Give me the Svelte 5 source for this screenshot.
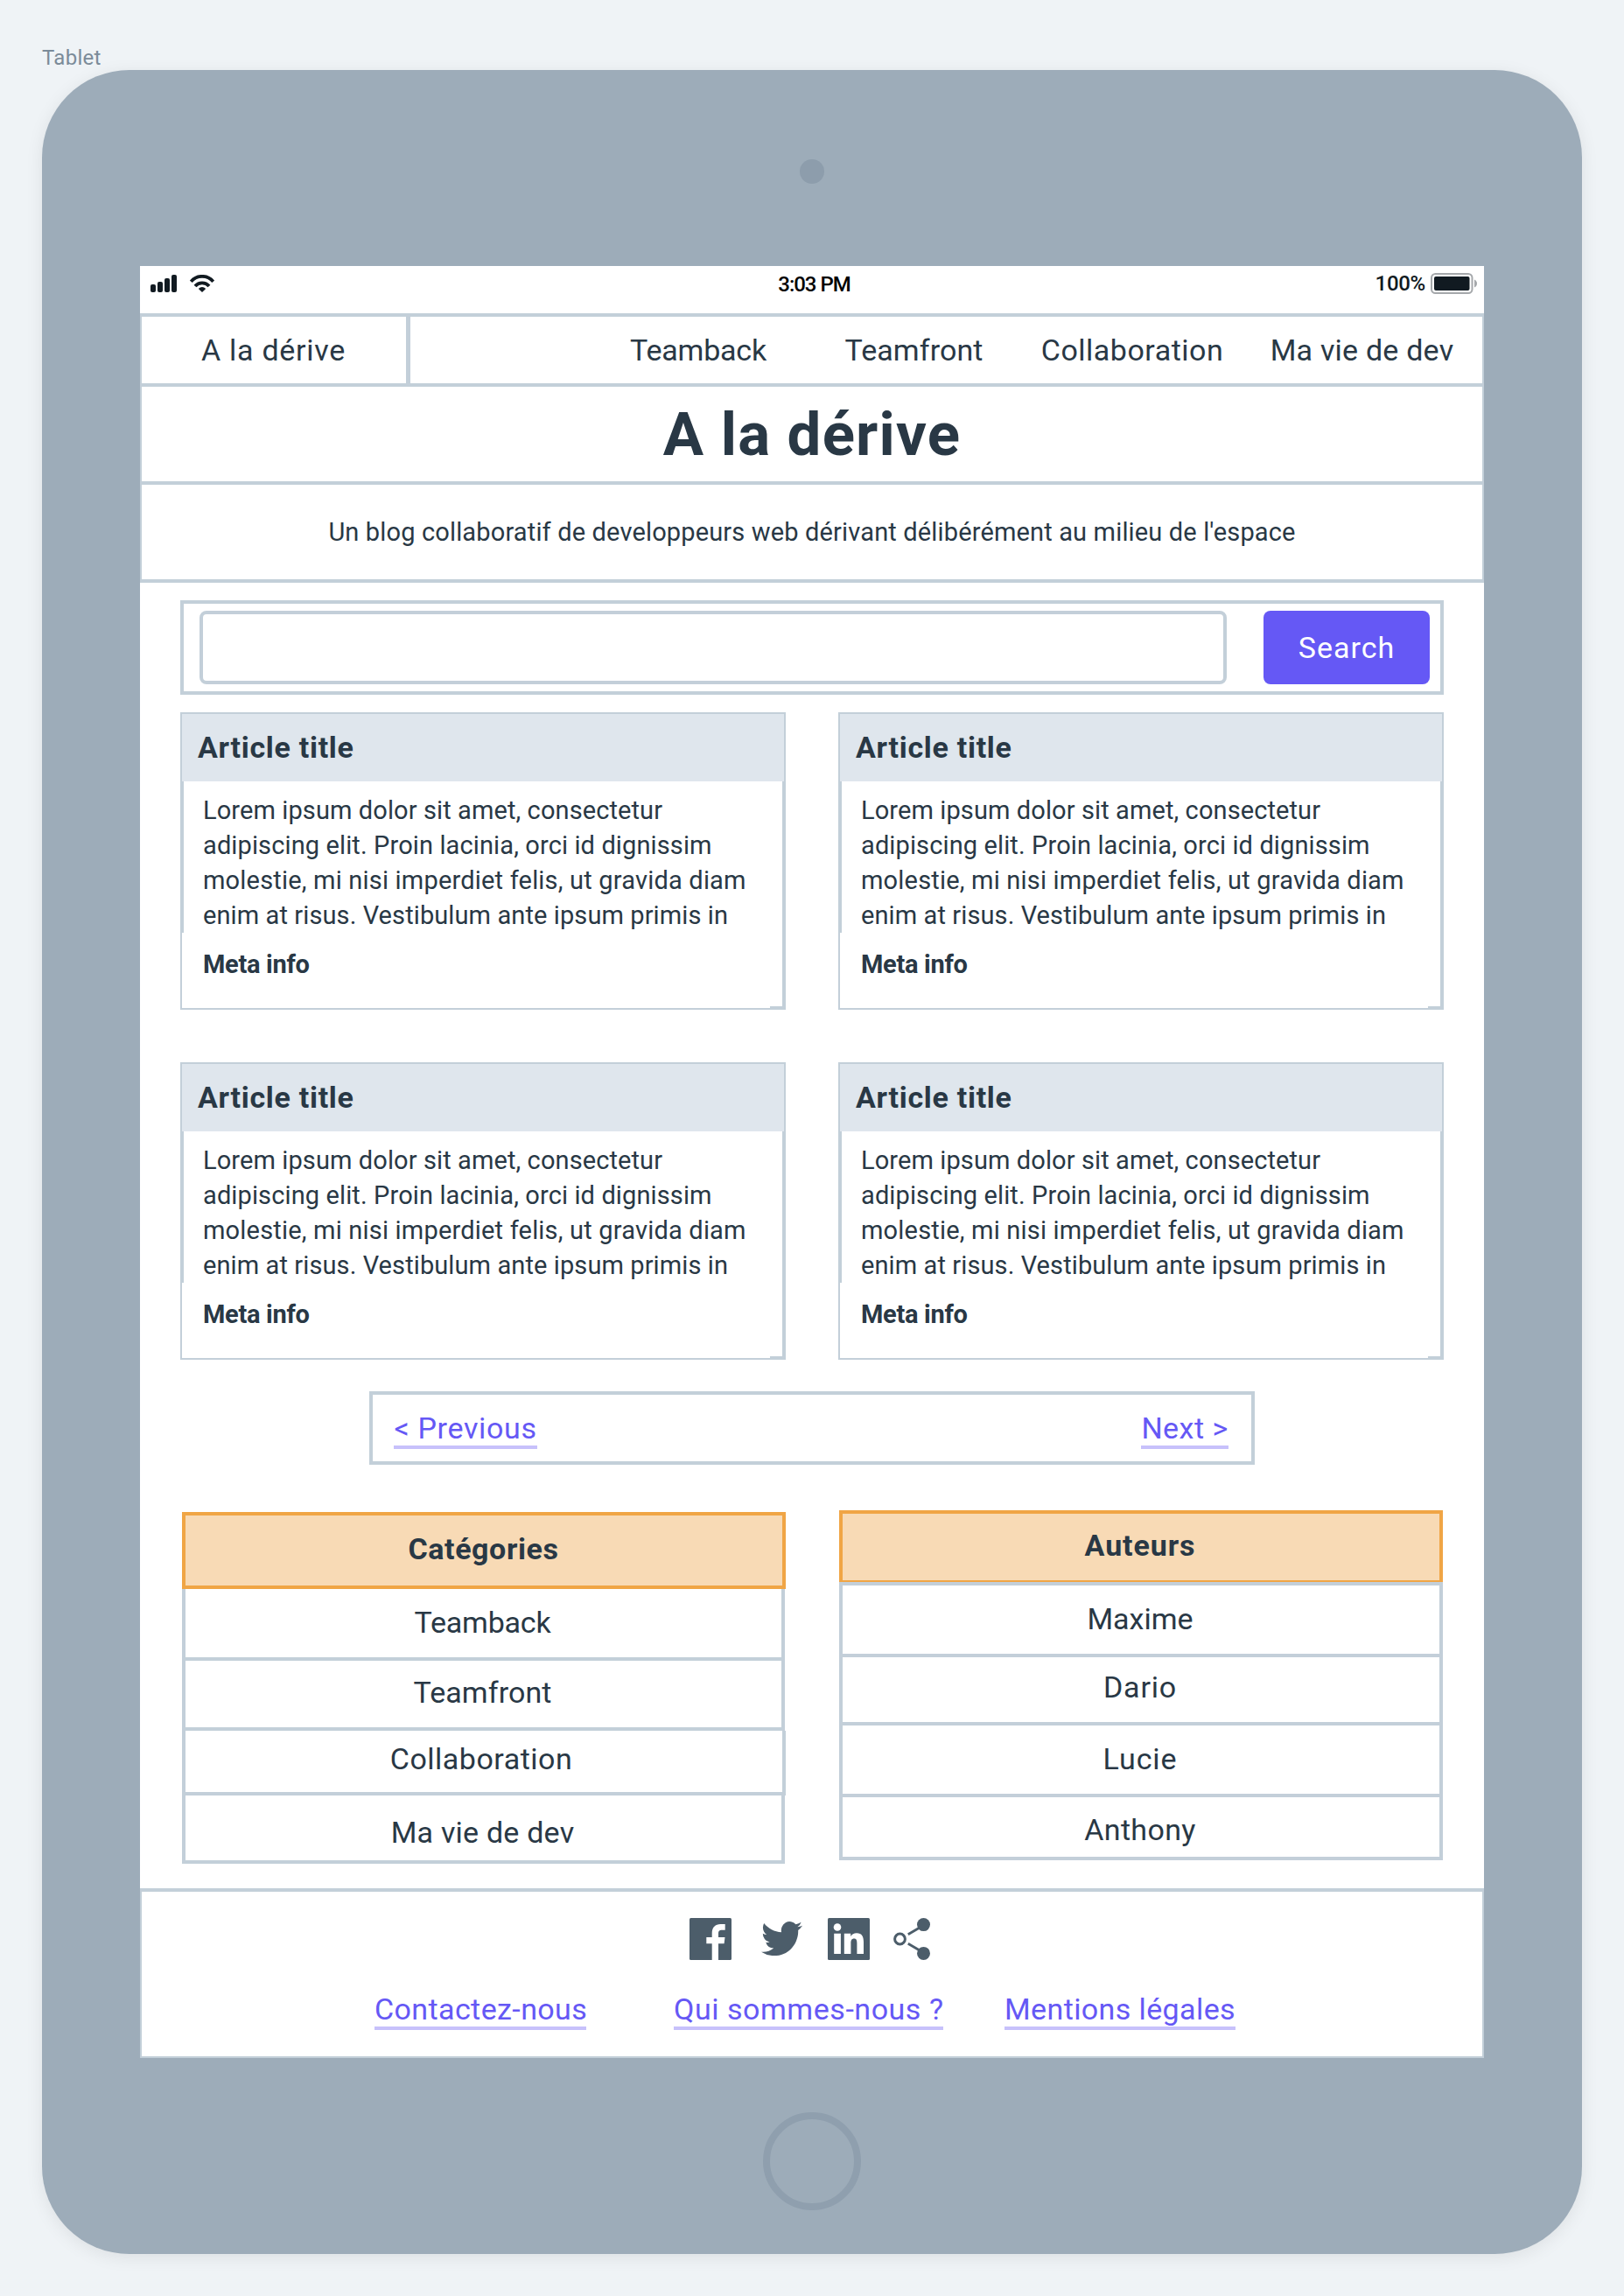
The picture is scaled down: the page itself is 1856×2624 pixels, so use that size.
<script>
  const nav = [
    { label: 'Teamback', tracking: -0.2 },
    { label: 'Teamfront', tracking: 0.1 },
    { label: 'Collaboration', tracking: 0.49 },
    { label: 'Ma vie de dev', tracking: 0.21 }
  ];

  const excerpt = [
    { text: 'Lorem ipsum dolor sit amet, consectetur', tracking: 0.1 },
    { text: 'adipiscing elit. Proin lacinia, orci id dignissim', tracking: 0.12 },
    { text: 'molestie, mi nisi imperdiet felis, ut gravida diam', tracking: 0.19 },
    { text: 'enim at risus. Vestibulum ante ipsum primis in', tracking: 0.1 }
  ];
  const articles = [1, 2, 3, 4];

  const categories = [
    { label: 'Teamback', height: 82, drop: -1, tracking: -0.2 },
    { label: 'Teamfront', height: 80, drop: -2, tracking: 0.1 },
    { label: 'Collaboration', height: 74, drop: -3, tracking: 0.49, wide: true },
    { label: 'Ma vie de dev', height: 78, drop: 5, tracking: 0.21 }
  ];
  const authors = [
    { label: 'Maxime', height: 86, drop: -1, tracking: 0 },
    { label: 'Dario', height: 78, drop: -3, tracking: 0.85 },
    { label: 'Lucie', height: 82, drop: -1, tracking: 0.9 },
    { label: 'Anthony', height: 72, drop: 3, tracking: 0.34 }
  ];
</script>

<main class="canvas">
  <div class="device-name">Tablet</div>
  <div class="tablet">
    <div class="camera"></div>
    <div class="screen">
      <div class="status">
        <div class="signal">
          <svg width="30" height="20" viewBox="0 0 30 20" fill="#111a21">
            <rect x="0" y="11" width="6" height="9" rx="2" />
            <rect x="8" y="8" width="6" height="12" rx="2" />
            <rect x="16" y="4" width="6" height="16" rx="2" />
            <rect x="24" y="0" width="6" height="20" rx="2" />
          </svg>
          <svg width="28" height="20" viewBox="0 0 28 20" fill="none" stroke="#111a21" stroke-width="3.8">
            <path d="M1.3 7.8A16.5 16.5 0 0 1 26.7 7.8" />
            <path d="M6 13A10.6 10.6 0 0 1 22 13" />
            <path d="M9.8 15.9Q14 12.2 18.2 15.9L14 20Z" fill="#111a21" stroke="none" />
          </svg>
        </div>
        <div class="time">3:03 PM</div>
        <div class="power">
          <span>100%</span>
          <svg width="54" height="24" viewBox="0 0 54 24">
            <rect x="1" y="1" width="46.5" height="22" rx="4.5" fill="none" stroke="#a5a8ab" stroke-width="2" />
            <rect x="4" y="4" width="40.5" height="16" rx="2" fill="#111a21" />
            <path d="M50 7.5Q53 9 53 12T50 16.5Z" fill="#a5a8ab" />
          </svg>
        </div>
      </div>

      <header>
        <div class="topbar">
          <div class="brand">A la dérive</div>
          <nav>
            {#each nav as item}
              <span style:letter-spacing="{item.tracking}px">{item.label}</span>
            {/each}
          </nav>
        </div>
        <h1>A la dérive</h1>
        <p class="tagline">Un blog collaboratif de developpeurs web dérivant délibérément au milieu de l'espace</p>
      </header>

      <section class="content">
        <div class="search">
          <div class="field"></div>
          <div class="button">Search</div>
        </div>

        <div class="articles">
          {#each articles as id (id)}
            <article>
              <h2>Article title</h2>
              <div class="excerpt">
                {#each excerpt as line}
                  <div style:letter-spacing="{line.tracking}px">{line.text}</div>
                {/each}
              </div>
              <div class="meta">Meta info</div>
              <i class="corner"></i>
            </article>
          {/each}
        </div>

        <div class="pager">
          <span class="link previous">&lt; Previous</span>
          <span class="link next">Next &gt;</span>
        </div>

        <div class="lists">
          <div class="list categories">
            <h3>Catégories</h3>
            {#each categories as row}
              <div class="row" class:wide={row.wide} style:height="{row.height}px">
                <span style:letter-spacing="{row.tracking}px" style:margin-top="{row.drop * 2}px">{row.label}</span>
              </div>
            {/each}
          </div>
          <div class="list authors">
            <h3>Auteurs</h3>
            {#each authors as row}
              <div class="row" style:height="{row.height}px">
                <span style:letter-spacing="{row.tracking}px" style:margin-top="{row.drop * 2}px">{row.label}</span>
              </div>
            {/each}
          </div>
        </div>
      </section>

      <footer>
        <div class="social">
          <svg class="facebook" width="48" height="48" viewBox="0 0 48 48">
            <rect width="48" height="48" rx="1.5" fill="#4c5d6a" />
            <path fill="#fff" d="M25.7 48V29.3H19.3V22H25.7V17.5C25.7 10.5 29.5 7 35.5 7H40.7V13.7H37.3C34 13.7 33 15 33 18V22H40.5L39.6 29.3H33V48Z" />
          </svg>
          <svg class="twitter" width="47" height="39" viewBox="0 2.2 24 19.5" preserveAspectRatio="none">
            <path fill="#4c5d6a" d="M23.953 4.57a10 10 0 01-2.825.775 4.958 4.958 0 002.163-2.723c-.951.555-2.005.959-3.127 1.184a4.92 4.92 0 00-8.384 4.482C7.69 8.095 4.067 6.13 1.64 3.162a4.822 4.822 0 00-.666 2.475c0 1.71.87 3.213 2.188 4.096a4.904 4.904 0 01-2.228-.616v.06a4.923 4.923 0 003.946 4.827 4.996 4.996 0 01-2.212.085 4.936 4.936 0 004.604 3.417 9.867 9.867 0 01-6.102 2.105c-.39 0-.779-.023-1.17-.067a13.995 13.995 0 007.557 2.209c9.053 0 13.998-7.496 13.998-13.985 0-.21 0-.42-.015-.63A9.935 9.935 0 0024 4.59z" />
          </svg>
          <svg class="linkedin" width="48" height="48" viewBox="0 0 48 48">
            <rect width="48" height="48" rx="1.5" fill="#4c5d6a" />
            <circle cx="11" cy="10.5" r="4.3" fill="#fff" />
            <path fill="#fff" d="M7.2 17.8H14.9V41H7.2ZM18.8 17.8H26.2V21C27.5 18.8 30 17.2 33 17.2C39 17.2 41 21.2 41 27.5V41H33.4V29C33.4 25.8 32.8 23.6 30.2 23.6C27.2 23.6 26.4 25.8 26.4 29V41H18.8Z" />
          </svg>
          <svg class="share" width="42" height="48" viewBox="0 0 42 48" fill="#4c5d6a" stroke="#4c5d6a">
            <circle cx="7.5" cy="24" r="5.9" fill="none" stroke-width="3" />
            <path d="M16.8 18.8L30 11M16.8 29.2L30 37" stroke-width="2.8" />
            <circle cx="34.5" cy="7.6" r="7.5" stroke="none" />
            <circle cx="34.5" cy="40.4" r="7.5" stroke="none" />
          </svg>
        </div>
        <div class="footer-links">
          <span class="link contact">Contactez-nous</span>
          <span class="link about">Qui sommes-nous ?</span>
          <span class="link legal">Mentions légales</span>
        </div>
      </footer>
    </div>
    <div class="home"></div>
  </div>
</main>

<style>
  :global(body) {
    background: #eff3f6;
  }
  .canvas {
    --line: #c3cfd9;
    --ink: #293845;
    box-sizing: border-box;
    width: 1856px;
    height: 2624px;
    padding: 50px 48px 48px;
    overflow: hidden;
    font-family: Roboto, "Liberation Sans", sans-serif;
    font-size: 34px;
    color: var(--ink);
    white-space: nowrap;
  }
  .canvas * {
    box-sizing: border-box;
  }
  .device-name {
    height: 30px;
    font-size: 24px;
    line-height: 32px;
    letter-spacing: 0.3px;
    color: #7b8b99;
  }
  .tablet {
    display: flex;
    flex-direction: column;
    align-items: center;
    height: 2496px;
    border-radius: 100px;
    background: #9dacb9;
    box-shadow: 0 4px 20px rgba(0, 0, 0, 0.08);
  }
  .camera {
    width: 28px;
    height: 28px;
    margin: 102px 0 94px;
    border-radius: 50%;
    background: #8d9dac;
  }
  .screen {
    display: flex;
    flex-direction: column;
    width: 1536px;
    height: 2048px;
    background: #fff;
  }
  .home {
    width: 112px;
    height: 112px;
    margin-top: 62px;
    border: 8px solid #8f9fae;
    border-radius: 50%;
  }

  .status {
    display: grid;
    grid-template-columns: 1fr auto 1fr;
    align-items: center;
    height: 54px;
    padding: 0 7px 14px 12px;
    font-size: 24px;
    font-weight: 500;
  }
  .signal {
    display: flex;
    gap: 15px;
  }
  .time {
    padding-top: 1px;
    letter-spacing: -1px;
    color: #000;
  }
  .power {
    display: flex;
    justify-content: flex-end;
    align-items: center;
    gap: 6px;
    color: #111a21;
    letter-spacing: -0.3px;
  }

  header {
    border: solid var(--line);
    border-width: 4px 2px 0;
  }
  .topbar {
    display: flex;
    height: 80px;
    border-bottom: 4px solid var(--line);
    line-height: 76px;
  }
  .brand {
    width: 307px;
    padding-right: 1px;
    border-right: 5px solid var(--line);
    letter-spacing: 0.7px;
    text-align: center;
  }
  nav {
    display: grid;
    grid-template-columns: 246px 247px 252px 273px;
    flex: 1;
    justify-content: end;
    padding-right: 1px;
    text-align: center;
  }
  h1 {
    height: 112px;
    margin: 0;
    border-bottom: 4px solid var(--line);
    font-size: 69px;
    font-weight: 700;
    line-height: 110px;
    letter-spacing: 1.2px;
    text-align: center;
  }
  .tagline {
    height: 112px;
    margin: 0;
    border-bottom: 4px solid var(--line);
    font-size: 29px;
    line-height: 108px;
    letter-spacing: 0.15px;
    text-align: center;
  }

  .content {
    height: 1492px;
    padding: 20px 46px 0;
  }
  .search {
    display: flex;
    justify-content: space-between;
    align-items: center;
    height: 108px;
    padding: 0 12px 0 18px;
    border: 4px solid var(--line);
  }
  .field {
    width: 1174px;
    height: 84px;
    border: 4px solid var(--line);
    border-radius: 8px;
  }
  .button {
    width: 190px;
    height: 84px;
    border-radius: 8px;
    background: #6558f5;
    color: #fff;
    line-height: 84px;
    letter-spacing: 1px;
    text-align: center;
  }

  .articles {
    display: grid;
    grid-template-columns: 692px 692px;
    gap: 60px;
    margin-top: 20px;
  }
  article {
    position: relative;
    height: 340px;
    border-bottom: 2px solid var(--line);
  }
  h2 {
    height: 79px;
    margin: 0;
    padding-left: 18px;
    border: solid var(--line);
    border-width: 2px 2px 0;
    background: #dfe6ed;
    font-size: 34px;
    font-weight: 700;
    line-height: 77px;
    letter-spacing: 0.7px;
  }
  .excerpt {
    height: 173px;
    padding: 13px 0 0 22px;
    border: solid var(--line);
    border-width: 0 4px;
    font-size: 29px;
    line-height: 40px;
  }
  .meta {
    height: 86px;
    padding-left: 24px;
    border: solid var(--line);
    border-width: 0 4px 0 2px;
    font-size: 29px;
    font-weight: 700;
    line-height: 72px;
    letter-spacing: -0.3px;
  }
  .corner {
    position: absolute;
    right: 0;
    bottom: -2px;
    width: 18px;
    height: 4px;
    background: var(--line);
  }

  .link {
    display: block;
    height: 46px;
    border-bottom: 4px solid #c7c1fb;
    color: #6558f5;
    line-height: 44px;
    text-align: center;
  }
  .pager {
    display: flex;
    justify-content: space-between;
    width: 1012px;
    height: 84px;
    margin: 36px 0 0 216px;
    padding: 16px 26px 0 24px;
    border: 4px solid var(--line);
  }
  .previous {
    width: 164px;
    letter-spacing: 0.66px;
  }
  .next {
    width: 100px;
    letter-spacing: 0.46px;
  }

  .lists {
    display: flex;
    gap: 61px;
    align-items: flex-start;
    margin: 52px 0 0 2px;
  }
  .list {
    width: 690px;
    text-align: center;
  }
  .categories {
    margin-top: 2px;
  }
  h3 {
    margin: 0;
    border: 4px solid #f0a545;
    background: #f8dab5;
    font-size: 34px;
    font-weight: 700;
  }
  .categories h3 {
    height: 88px;
    padding-right: 1px;
    line-height: 77px;
    letter-spacing: 0.6px;
  }
  .authors h3 {
    height: 82px;
    padding-right: 2px;
    border-bottom-width: 2px;
    line-height: 73px;
    letter-spacing: 0.9px;
  }
  .row {
    display: flex;
    justify-content: center;
    align-items: center;
    border: solid var(--line);
    border-width: 0 4px 4px;
    padding-right: 2px;
  }
  .categories .row {
    width: 689px;
  }
  .categories .wide {
    width: 690px;
    padding-right: 6px;
  }
  .authors .row:nth-child(2) {
    border-top-width: 4px;
  }

  footer {
    flex: 1;
    border: solid var(--line);
    border-width: 4px 2px 2px;
  }
  .social {
    display: flex;
    height: 79px;
    padding: 30px 0 0 625.5px;
  }
  .twitter {
    margin: 4px 29.5px 0 34px;
  }
  .share {
    margin-left: 27px;
  }
  .footer-links {
    display: flex;
    padding: 33px 0 0 266px;
  }
  .contact {
    width: 242px;
    letter-spacing: 0.4px;
  }
  .about {
    width: 308px;
    margin: 0 70px 0 100px;
    letter-spacing: 0.54px;
  }
  .legal {
    width: 264px;
    letter-spacing: 0.39px;
  }
</style>
